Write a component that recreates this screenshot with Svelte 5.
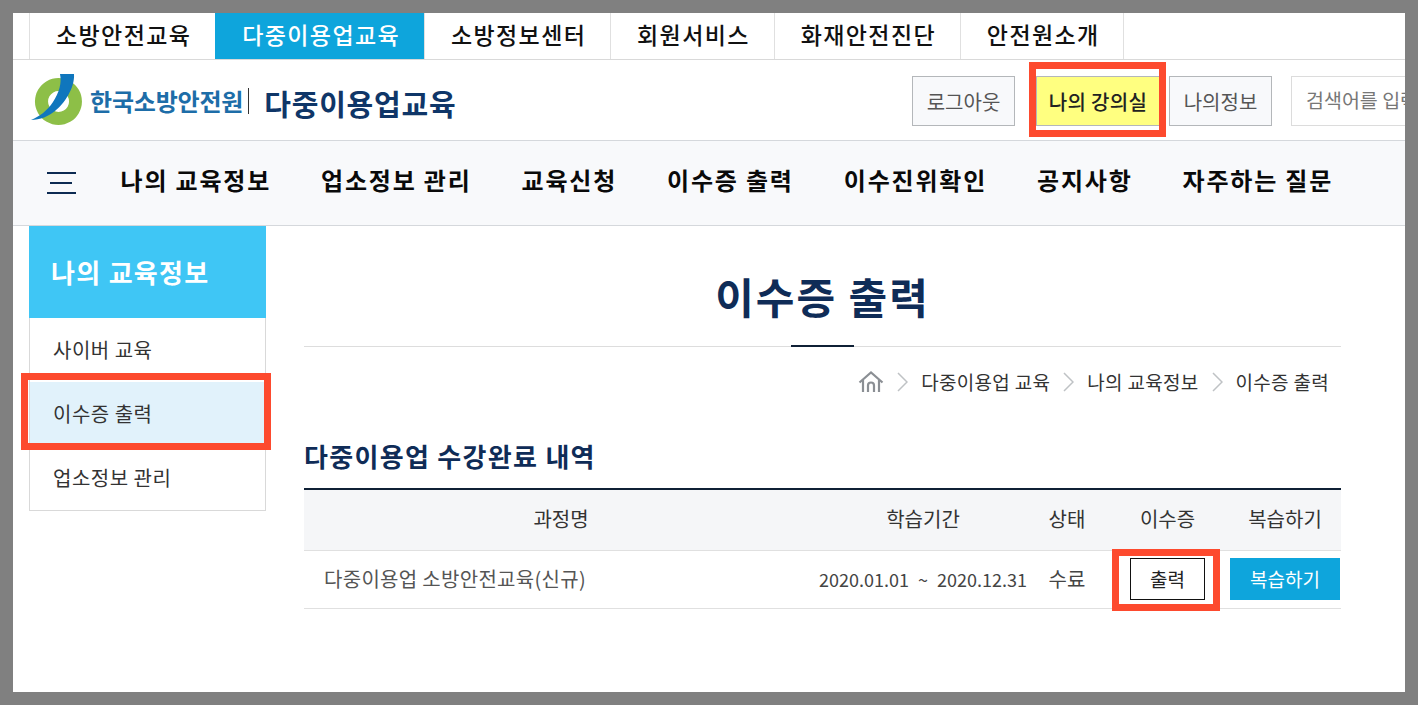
<script>
	const tabs = ['소방안전교육', '다중이용업교육', '소방정보센터', '회원서비스', '화재안전진단', '안전원소개'];
	const menu = ['나의 교육정보', '업소정보 관리', '교육신청', '이수증 출력', '이수진위확인', '공지사항', '자주하는 질문'];
	const side = ['사이버 교육', '이수증 출력', '업소정보 관리'];
	const crumbs = ['다중이용업 교육', '나의 교육정보', '이수증 출력'];
</script>

<div class="frame">
	<ul class="tabs">
		{#each tabs as tab, i}
			<li class:on={i === 1}>{tab}</li>
		{/each}
	</ul>

	<header class="head">
		<div class="logo">
			<svg width="54" height="54" viewBox="0 0 54 54">
				<path d="M28.500 4a23.500 23.500 0 1 1-.1 0zM28.500 17a10.500 10.500 0 1 0 .1 0z" fill="#8dbf47" fill-rule="evenodd"/>
				<path d="M30 0H44C45 14 34 30 25 37 19 42 10 46 1 46 10 42 17 37 23 28 29 19 32 9 30 0z" fill="#0f76bd"/>
			</svg>
			<span class="org">한국소방안전원</span>
			<span class="name">다중이용업교육</span>
		</div>
		<div class="tools">
			<button class="btn">로그아웃</button>
			<button class="btn mine">나의 강의실</button>
			<button class="btn">나의정보</button>
			<div class="search">검색어를 입력하세요</div>
		</div>
	</header>

	<nav class="menu">
		<div class="burger"><i></i><i class="short"></i><i></i></div>
		{#each menu as item}
			<span>{item}</span>
		{/each}
	</nav>

	<div class="body">
		<aside class="side">
			<h2>나의 교육정보</h2>
			<ul>
				{#each side as item, i}
					<li class:on={i === 1}>{item}</li>
				{/each}
			</ul>
		</aside>

		<main class="main">
			<h1>이수증 출력</h1>
			<div class="crumbs">
				<svg width="26" height="22" viewBox="0 0 26 22" fill="none" stroke="#8b8f94" stroke-width="2.200">
					<path d="M1.500 11.500 13 1.500 24.500 11.500"/>
					<path d="M5 9V21M21 9V21"/>
					<path d="M10 21V14.500a3 3 0 0 1 6 0V21"/>
				</svg>
				{#each crumbs as crumb}
					<svg class="chev" width="11" height="20" viewBox="0 0 11 20" fill="none" stroke="#bfc2c5" stroke-width="1.500">
						<path d="M1 1 10 10 1 19"/>
					</svg>
					<span>{crumb}</span>
				{/each}
			</div>

			<h3>다중이용업 수강완료 내역</h3>
			<table>
				<thead>
					<tr>
						<th class="c1">과정명</th>
						<th class="c2">학습기간</th>
						<th class="c3">상태</th>
						<th class="c4">이수증</th>
						<th class="c5">복습하기</th>
					</tr>
				</thead>
				<tbody>
					<tr>
						<td class="course">다중이용업 소방안전교육(신규)</td>
						<td class="date">2020.01.01 ~ 2020.12.31</td>
						<td>수료</td>
						<td><button class="print">출력</button></td>
						<td class="last"><button class="review">복습하기</button></td>
					</tr>
				</tbody>
			</table>
		</main>
	</div>

	<div class="mark mark-top"></div>
	<div class="mark mark-side"></div>
	<div class="mark mark-print"></div>
</div>

<style>
	:global(body) {
		background: #808080;
		overflow: hidden;
	}

	.frame {
		position: relative;
		box-sizing: border-box;
		width: 1392px;
		height: 679px;
		margin: 13px 0 0 13px;
		background: #fff;
		overflow: hidden;
		font-family: "Noto Sans CJK KR", "Noto Sans", sans-serif;
		color: #222;
	}

	ul {
		list-style: none;
		margin: 0;
		padding: 0;
	}

	button {
		font-family: inherit;
		cursor: pointer;
	}

	.tabs {
		display: flex;
		height: 46px;
		padding-left: 16px;
		border-bottom: 1px solid #d9d9d9;
	}

	.tabs li {
		padding: 0 23.800px 0 26px;
		border-left: 1px solid #e0e0e0;
		font-size: 23px;
		font-weight: 500;
		line-height: 42px;
		letter-spacing: 1.400px;
		color: #111;
	}

	.tabs li:last-child {
		border-right: 1px solid #e0e0e0;
	}

	.tabs li.on {
		background: #0ea5dc;
		border-left-color: #0ea5dc;
		color: #fff;
	}

	.head {
		display: flex;
		justify-content: space-between;
		height: 80px;
		padding-left: 17px;
		border-bottom: 1px solid #d5d8dc;
	}

	.logo {
		display: flex;
		align-items: center;
	}

	.logo svg {
		margin-top: 1px;
	}

	.org {
		margin: 2px 0 0 6px;
		padding-right: 5px;
		border-right: 1px solid #333;
		font-size: 24px;
		font-weight: 700;
		line-height: 26px;
		letter-spacing: -0.200px;
		color: #1d6da8;
	}

	.name {
		margin: 6px 0 0 15px;
		font-size: 29px;
		font-weight: 700;
		letter-spacing: 0.800px;
		color: #0f3668;
	}

	.tools {
		display: flex;
		flex: none;
		width: 493px;
		padding-top: 16px;
		gap: 21px;
		overflow: hidden;
	}

	.btn {
		flex: none;
		width: 103px;
		height: 50px;
		padding: 0;
		border: 1px solid #b4b7ba;
		background: #f8f9fb;
		font-size: 20px;
		color: #555;
	}

	.btn.mine {
		width: 124px;
		background: #ffff80;
		color: #222;
		font-weight: 500;
		letter-spacing: 0.300px;
		margin-right: -12px;
	}

	.search {
		flex: none;
		width: 240px;
		height: 48px;
		margin-left: -2px;
		padding-left: 14px;
		border: 1px solid #dcdcdc;
		font-size: 19.500px;
		line-height: 46px;
		white-space: nowrap;
		color: #777;
	}

	.menu {
		display: flex;
		align-items: center;
		gap: 50px;
		height: 84px;
		padding-left: 34px;
		background: #f8f9fb;
		border-bottom: 1px solid #d5d8dc;
		font-size: 24px;
		font-weight: 700;
		letter-spacing: 1.800px;
		color: #0a0a0a;
	}

	.menu span {
		padding-bottom: 8px;
	}

	.burger {
		display: flex;
		flex-direction: column;
		gap: 8px;
		width: 29px;
		margin-right: -5.500px;
	}

	.burger i {
		display: block;
		height: 2px;
		background: #0d2b52;
	}

	.burger i.short {
		width: 22px;
		margin-left: 3px;
	}

	.body {
		display: flex;
		padding-left: 16px;
	}

	.side {
		flex: none;
		width: 237px;
	}

	.side h2 {
		height: 92px;
		margin: 0;
		padding-left: 22px;
		background: #3fc6f5;
		font-size: 26px;
		font-weight: 700;
		line-height: 92px;
		letter-spacing: 1.300px;
		color: #fff;
	}

	.side ul {
		border: 1px solid #d9d9d9;
		border-top: 0;
	}

	.side li {
		height: 64px;
		padding-left: 23px;
		font-size: 20px;
		line-height: 63px;
		letter-spacing: 0.500px;
		color: #333;
	}

	.side li.on {
		background: #e1f2fb;
	}

	.main {
		flex: none;
		width: 1037px;
		margin-left: 38px;
	}

	h1 {
		height: 121px;
		box-sizing: border-box;
		position: relative;
		margin: 0;
		border-bottom: 1px solid #ddd;
		font-size: 42px;
		font-weight: 700;
		line-height: 140px;
		letter-spacing: 2px;
		text-align: center;
		color: #0f2c57;
	}

	h1::after {
		content: "";
		position: absolute;
		left: 487px;
		bottom: -1px;
		width: 63px;
		height: 2px;
		background: #0f2035;
	}

	.crumbs {
		display: flex;
		align-items: center;
		justify-content: flex-end;
		gap: 13px;
		height: 69px;
		padding: 0 12px 2px 0;
		font-size: 19px;
		letter-spacing: 0.300px;
		color: #333;
	}

	h3 {
		margin: 0;
		padding-top: 15px;
		height: 55px;
		font-size: 26px;
		font-weight: 700;
		line-height: 46px;
		letter-spacing: 1.300px;
		color: #0f2c57;
	}

	table {
		width: 100%;
		border-collapse: collapse;
		table-layout: fixed;
		border-top: 2px solid #0f2035;
		font-size: 20px;
		color: #444;
	}

	th {
		height: 57px;
		padding: 0 0 3px;
		background: #f5f6f8;
		border-bottom: 1px solid #e0e0e0;
		font-weight: 400;
		color: #333;
	}

	td {
		height: 55px;
		padding: 0 0 2px;
		border-bottom: 1px solid #e0e0e0;
		text-align: center;
		white-space: nowrap;
	}

	.c1 { width: 514px; }
	.c2 { width: 210px; }
	.c3 { width: 78px; }
	.c4 { width: 123px; }

	td.course {
		padding-left: 20px;
		text-align: left;
		letter-spacing: 0.300px;
		color: #555;
	}

	td.date {
		font-size: 18px;
		word-spacing: 5px;
		text-align: right;
		padding-right: 1px;
	}

	td.last {
		text-align: right;
	}

	.print,
	.review {
		height: 42px;
		padding: 0;
		font-size: 19px;
		vertical-align: middle;
	}

	.print {
		width: 75px;
		border: 1px solid #111;
		background: #fff;
		color: #222;
	}

	.review {
		width: 110px;
		margin-right: 1px;
		border: 0;
		background: #0ea5dc;
		color: #fff;
	}

	.mark {
		position: absolute;
		box-sizing: border-box;
		border: 7px solid #fd4a2e;
		pointer-events: none;
	}

	.mark-top {
		left: 1016px;
		top: 49px;
		width: 137px;
		height: 75px;
	}

	.mark-side {
		left: 8px;
		top: 360px;
		width: 250px;
		height: 77px;
	}

	.mark-print {
		left: 1099px;
		top: 536px;
		width: 108px;
		height: 62px;
	}
</style>
